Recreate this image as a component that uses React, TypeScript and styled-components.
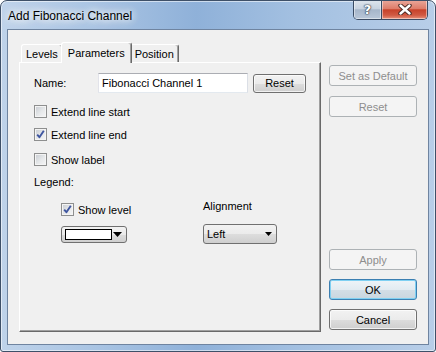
import React from "react";
import styled, { createGlobalStyle, css } from "styled-components";

const GlobalStyle = createGlobalStyle`
  html, body { margin: 0; padding: 0; width: 436px; height: 352px; overflow: hidden; background: #fff; }
  body { font-family: "Liberation Sans", Arial, sans-serif; font-size: 11px; color: #000; }
  * { box-sizing: border-box; }
`;

const Window = styled.div`
  width: 436px;
  height: 352px;
  display: flex;
  flex-direction: column;
  padding: 0 6px 6px;
  border: 1px solid #3e5068;
  border-radius: 7px 7px 3px 3px;
  background: linear-gradient(90deg, #bfd3ea 0%, #a9c4e3 22%, #8fb1d9 45%, #a3c0e1 68%, #b8cee8 100%);
  box-shadow: inset 0 0 0 1px rgba(255, 255, 255, 0.55);
  overflow: hidden;
`;

const TitleBar = styled.div`
  height: 28px;
  flex: none;
  margin: 0 -6px;
  padding: 0 7px 0 7px;
  display: flex;
  align-items: flex-start;
  justify-content: space-between;
`;

const Title = styled.span`
  align-self: center;
  margin-top: 2px;
  font-size: 12px;
  color: #000;
  text-shadow: 0 0 6px #fff, 0 0 10px rgba(255, 255, 255, 0.9), 0 0 14px rgba(255, 255, 255, 0.7);
`;

const CaptionGroup = styled.div`
  display: flex;
  height: 20px;
  margin-top: -1px;
  border: 1px solid #3a4b63;
  border-top: none;
  border-radius: 0 0 5px 5px;
  overflow: hidden;
`;

const CaptionButton = styled.div<{ $kind: "help" | "close" }>`
  height: 100%;
  display: flex;
  align-items: center;
  justify-content: center;
  box-shadow: inset 0 0 0 1px rgba(255, 255, 255, 0.45);
  ${(p) =>
    p.$kind === "help"
      ? css`
          width: 28px;
          border-right: 1px solid #3a4b63;
          background: linear-gradient(#dfe6ee 0%, #c8d3e0 45%, #a6b6ca 52%, #b9c7d8 100%);
          color: #fff;
          font-family: "DejaVu Sans", sans-serif;
          font-weight: bold;
          font-size: 13px;
          text-shadow: 0 0 1px #2e3a4c, 0 0 1px #2e3a4c, 0 0 2px #2e3a4c;
        `
      : css`
          width: 45px;
          background: linear-gradient(#eaa99c 0%, #de7d6a 45%, #c7422a 52%, #d15a43 80%, #e8927c 100%);
        `}
`;

const Client = styled.div`
  flex: 1;
  display: flex;
  gap: 8px;
  background: #f0f0f0;
  border: 1px solid #6f84a0;
  padding: 12px 11px 12px 11px;
`;

const Main = styled.div`
  width: 302px;
  display: flex;
  flex-direction: column;
`;

const TabStrip = styled.div`
  height: 20px;
  flex: none;
  display: flex;
  align-items: flex-end;
  padding-left: 2px;
`;

const Tab = styled.div<{ $active?: boolean }>`
  position: relative;
  height: 18px;
  padding: 0 4px;
  display: flex;
  align-items: center;
  background: #f0f0f0;
  border-top: 1px solid #fff;
  border-left: 1px solid #fff;
  border-right: 1px solid #696969;
  box-shadow: inset -1px 0 0 #a0a0a0;
  border-radius: 3px 3px 0 0;
  ${(p) =>
    p.$active &&
    css`
      z-index: 1;
      height: 21px;
      margin: 0 -2px -1px;
      padding: 0 6px 1px;
    `}
`;

const Panel = styled.div`
  flex: 1;
  display: flex;
  flex-direction: column;
  padding: 10px 14px;
  border: 1px solid;
  border-color: #fff #696969 #696969 #fff;
  box-shadow: inset -1px -1px 0 #a0a0a0;
`;

const FieldRow = styled.div`
  display: flex;
  align-items: center;
  height: 20px;
`;

const FieldLabel = styled.span`
  width: 64px;
`;

const TextInput = styled.input`
  width: 150px;
  height: 20px;
  padding: 0 3px;
  border: 1px solid;
  border-color: #abadb3 #dbdfe6 #e3e9ef #e2e3ea;
  background: #fff;
  color: #000;
  font: inherit;
  outline: none;
`;

const PushButton = styled.button<{ $variant?: "normal" | "default" | "disabled"; $w?: number; $h?: number; $mt?: number }>`
  width: ${(p) => (p.$w ? `${p.$w}px` : "100%")};
  height: ${(p) => p.$h ?? 21}px;
  margin-top: ${(p) => p.$mt ?? 0}px;
  flex: none;
  padding: 0;
  font: inherit;
  border-radius: 3px;
  display: flex;
  align-items: center;
  justify-content: center;
  ${(p) => {
    switch (p.$variant) {
      case "disabled":
        return css`
          border: 1px solid #adb2b5;
          background: #f4f4f4;
          color: #8e8e8e;
        `;
      case "default":
        return css`
          border: 1px solid #3c7fb1;
          background: linear-gradient(#eef4f8 0%, #e2ebf1 50%, #d3dee6 51%, #c9d6df 100%);
          box-shadow: inset 0 0 0 1px #7fd0f2;
          color: #000;
        `;
      default:
        return css`
          border: 1px solid #707070;
          background: linear-gradient(#f2f2f2 0%, #ebebeb 50%, #dddddd 51%, #cfcfcf 100%);
          box-shadow: inset 0 0 0 1px rgba(255, 255, 255, 0.7);
          color: #000;
        `;
    }
  }}
`;

const CheckRow = styled.label<{ $mt: number }>`
  display: flex;
  align-items: center;
  gap: 4px;
  height: 13px;
  margin-top: ${(p) => p.$mt}px;
`;

const Box = styled.span`
  width: 13px;
  height: 13px;
  flex: none;
  display: flex;
  align-items: center;
  justify-content: center;
  border: 1px solid #8e8f8f;
  background: linear-gradient(135deg, #c7cbd1 0%, #e6e8ea 55%, #f6f6f6 100%);
  box-shadow: inset 0 0 0 1px #f4f4f4;
`;

const TextLine = styled.div<{ $mt: number }>`
  height: 13px;
  line-height: 13px;
  margin-top: ${(p) => p.$mt}px;
`;

const LegendGrid = styled.div`
  margin-top: 11px;
  margin-left: 27px;
  display: grid;
  grid-template-columns: 142px auto;
`;

const LegendCol = styled.div`
  display: flex;
  flex-direction: column;
  align-items: flex-start;
`;

const ColorDrop = styled.div`
  width: 66px;
  height: 17px;
  margin-top: 10px;
  display: flex;
  align-items: center;
  justify-content: space-between;
  padding: 0 4px 0 3px;
  border: 1px solid #707070;
  border-radius: 3px;
  background: linear-gradient(#f2f2f2 0%, #ebebeb 50%, #dddddd 51%, #cfcfcf 100%);
`;

const Swatch = styled.span`
  width: 47px;
  height: 11px;
  border: 1px solid #000;
  background: #fff;
`;

const Combo = styled.div`
  width: 74px;
  height: 20px;
  margin-top: 11px;
  display: flex;
  align-items: center;
  justify-content: space-between;
  padding: 0 4px 0 3px;
  border: 1px solid #707070;
  border-radius: 3px;
  background: linear-gradient(#f2f2f2 0%, #ebebeb 50%, #dddddd 51%, #cfcfcf 100%);
`;

const SideButtons = styled.div`
  width: 88px;
  flex: none;
  display: flex;
  flex-direction: column;
  padding: 23px 0 2px;
`;

const Spacer = styled.div`
  flex: 1;
`;

const CheckMark = () => (
  <svg width="11" height="11" viewBox="0 0 11 11">
    <path d="M2.2 5.6 L4.4 8.2 L8.8 1.8" fill="none" stroke="#3f56a0" strokeWidth="1.9" strokeLinejoin="round" />
  </svg>
);

const CheckBox: React.FC<{ checked?: boolean; label: string; mt: number }> = ({ checked, label, mt }) => (
  <CheckRow $mt={mt}>
    <Box>{checked && <CheckMark />}</Box>
    <span>{label}</span>
  </CheckRow>
);

const Arrow: React.FC<{ w: number; h: number }> = ({ w, h }) => (
  <svg width={w} height={h} viewBox={`0 0 ${w} ${h}`}>
    <polygon points={`0,0 ${w},0 ${w / 2},${h}`} fill="#000" />
  </svg>
);

const CloseGlyph = () => (
  <svg width="14" height="11" viewBox="0 0 14 11">
    <path d="M2.5 1.5 L11.5 9.5 M11.5 1.5 L2.5 9.5" stroke="#4a2a24" strokeWidth="4.4" strokeLinecap="round" />
    <path d="M2.5 1.5 L11.5 9.5 M11.5 1.5 L2.5 9.5" stroke="#fff" strokeWidth="2.4" strokeLinecap="round" />
  </svg>
);

export default function App() {
  return (
    <>
      <GlobalStyle />
      <Window>
        <TitleBar>
          <Title>Add Fibonacci Channel</Title>
          <CaptionGroup>
            <CaptionButton $kind="help">?</CaptionButton>
            <CaptionButton $kind="close">
              <CloseGlyph />
            </CaptionButton>
          </CaptionGroup>
        </TitleBar>
        <Client>
          <Main>
            <TabStrip>
              <Tab>Levels</Tab>
              <Tab $active>Parameters</Tab>
              <Tab>Position</Tab>
            </TabStrip>
            <Panel>
              <FieldRow>
                <FieldLabel>Name:</FieldLabel>
                <TextInput readOnly value="Fibonacci Channel 1" />
                <PushButton $w={53} $h={19} style={{ marginLeft: 5 }}>
                  Reset
                </PushButton>
              </FieldRow>
              <CheckBox label="Extend line start" mt={12} />
              <CheckBox label="Extend line end" checked mt={10} />
              <CheckBox label="Show label" mt={12} />
              <TextLine $mt={10}>Legend:</TextLine>
              <LegendGrid>
                <LegendCol>
                  <CheckBox label="Show level" checked mt={3} />
                  <ColorDrop>
                    <Swatch />
                    <Arrow w={9} h={5} />
                  </ColorDrop>
                </LegendCol>
                <LegendCol>
                  <TextLine $mt={0}>Alignment</TextLine>
                  <Combo>
                    <span>Left</span>
                    <Arrow w={7} h={4} />
                  </Combo>
                </LegendCol>
              </LegendGrid>
            </Panel>
          </Main>
          <SideButtons>
            <PushButton $variant="disabled">Set as Default</PushButton>
            <PushButton $variant="disabled" $mt={10}>
              Reset
            </PushButton>
            <Spacer />
            <PushButton $variant="disabled">Apply</PushButton>
            <PushButton $variant="default" $mt={9}>
              OK
            </PushButton>
            <PushButton $mt={9}>Cancel</PushButton>
          </SideButtons>
        </Client>
      </Window>
    </>
  );
}
